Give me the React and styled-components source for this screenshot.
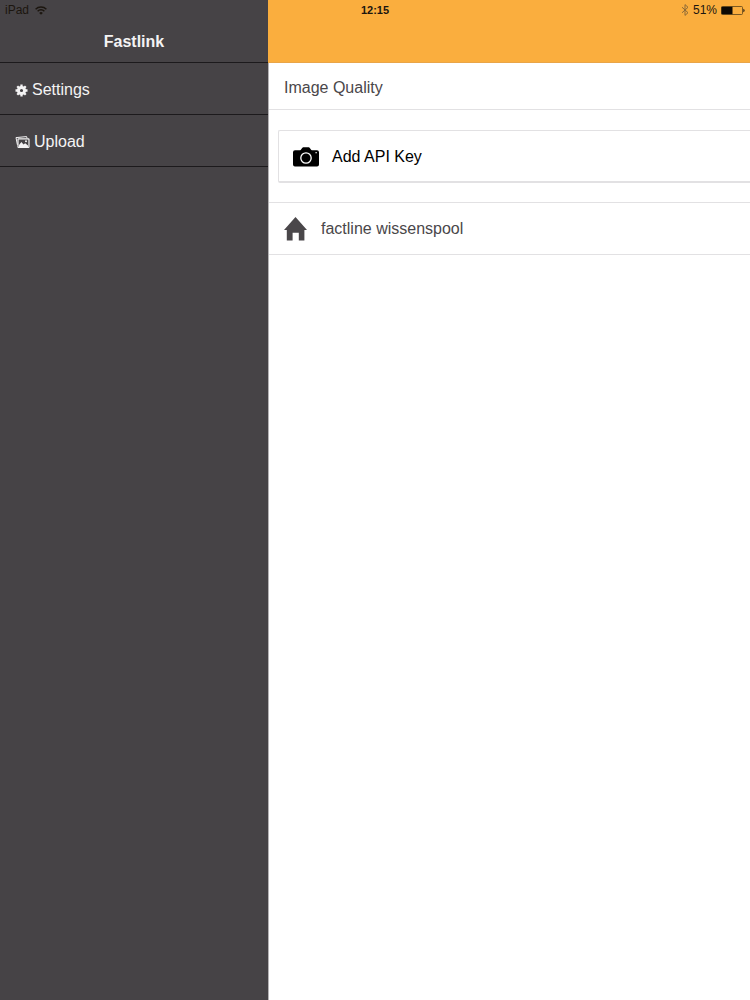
import styled, { createGlobalStyle } from 'styled-components'

const GlobalStyle = createGlobalStyle`
  * {
    box-sizing: border-box;
  }
  body {
    margin: 0;
    background: #fff;
    font-family: "Liberation Sans", Helvetica, Arial, sans-serif;
    font-size: 16px;
    line-height: 20px;
  }
`

const Layout = styled.div`
  display: grid;
  grid-template-columns: 268px 1fr;
  grid-template-rows: 20px 1fr;
  min-height: 100vh;
`

const StatusBar = styled.header`
  grid-area: 1 / 1 / 2 / 3;
  z-index: 1;
  display: grid;
  grid-template-columns: 1fr auto 1fr;
  align-items: center;
  padding: 0 5px;
  font-size: 12px;
  color: #1c160f;
`

const StatusGroup = styled.div`
  display: flex;
  align-items: center;
  gap: ${({ $end }) => ($end ? '4px' : '6px')};
  justify-content: ${({ $end }) => ($end ? 'flex-end' : 'flex-start')};
`

const Clock = styled.time`
  font-size: 11px;
  font-weight: bold;
`

const Sidebar = styled.aside`
  grid-area: 1 / 1 / 3 / 2;
  background: #464346;
  color: #f4f3f4;
`

const SidebarHeader = styled.div`
  height: 63px;
  padding-top: 22px;
  display: flex;
  align-items: center;
  justify-content: center;
  border-bottom: 1px solid #1c1a1c;
`

const Title = styled.h1`
  margin: 0;
  font-size: 16px;
  line-height: 20px;
`

const MenuLink = styled.a`
  display: flex;
  align-items: center;
  gap: 4px;
  height: 52px;
  padding: 3px 15px 0;
  border-bottom: 1px solid #1c1a1c;
  color: inherit;
  text-decoration: none;
`

const Content = styled.main`
  grid-area: 1 / 2 / 3 / 3;
  min-width: 0;
  border-left: 1px solid #b5b3b5;
  background: #fff;
  color: #4a474a;
`

const TopBar = styled.div`
  height: 63px;
  margin-left: -1px;
  background: #faae3e;
  border-bottom: 1px solid #e9a548;
`

const Row = styled.button`
  display: flex;
  align-items: center;
  gap: 14px;
  width: 100%;
  height: ${({ $height }) => $height}px;
  padding: ${({ $topLine }) => ($topLine ? '1px 15px 0' : '4px 15px 0')};
  border: solid #e2e1e3;
  border-width: ${({ $topLine }) => ($topLine ? '1px 0' : '0 0 1px')};
  background: none;
  color: inherit;
  font: inherit;
  text-align: left;
`

const Card = styled.section`
  margin: 20px 0 19px 9px;
  border: 1px solid #e2e1e3;
  border-right: 0;
  border-bottom-width: 2px;
  border-radius: 2px 0 0 2px;
`

const CardButton = styled.button`
  display: flex;
  align-items: center;
  gap: 13px;
  width: 100%;
  height: 50px;
  padding: 2px 14px 0;
  border: 0;
  background: none;
  color: #000;
  font: inherit;
  text-align: left;
`

const Svg = styled.svg`
  display: block;
  flex: none;
`

const WifiIcon = () => (
  <Svg width="12" height="9" viewBox="0 0 12 9" fill="none" stroke="currentColor" strokeWidth="1.4" aria-hidden="true">
    <path d="M.6 3.2a7.6 7.6 0 0 1 10.8 0" />
    <path d="M2.6 5.2a4.8 4.8 0 0 1 6.8 0" />
    <path d="M6 8.8 4.2 6.9a2.6 2.6 0 0 1 3.6 0z" fill="currentColor" stroke="none" />
  </Svg>
)

const BluetoothIcon = () => (
  <Svg width="8" height="12" viewBox="0 0 8 12" fill="none" stroke="#8c6a38" strokeWidth="1" aria-hidden="true">
    <path d="M1 3.2 7 8.7 4 11.4V.6l3 2.7L1 8.8" />
  </Svg>
)

const BatteryIcon = () => (
  <Svg width="24" height="9" viewBox="0 0 24 9" aria-hidden="true">
    <rect x=".5" y=".5" width="21" height="8" rx="1" fill="none" stroke="#5a421a" strokeWidth=".8" />
    <rect x=".5" y=".8" width="11" height="7.4" fill="#0d0a05" />
    <path d="M22.4 2.8c1.6.5 1.6 2.9 0 3.4z" fill="#1c160f" />
  </Svg>
)

const GearIcon = () => (
  <Svg width="13" height="13" viewBox="0 0 26 26" fill="none" stroke="currentColor" aria-hidden="true">
    <circle cx="13" cy="13" r="6.2" strokeWidth="6" />
    <path d="M13 1v24M1 13h24M4.5 4.5l17 17M21.5 4.5l-17 17" strokeWidth="4.6" strokeDasharray="5 14 5" />
  </Svg>
)

const ImagesIcon = () => (
  <Svg width="15" height="13" viewBox="0 0 15 13" aria-hidden="true">
    <path d="M2.4 8.8 1 1.6 11.6.6l.4 1.6" fill="none" stroke="currentColor" strokeWidth="1" />
    <rect x="3" y="2.8" width="11" height="8.6" rx=".6" fill="none" stroke="currentColor" strokeWidth="1.2" />
    <path d="M4 11V9l2.4-3 2.1 2.4 1.7-1.2L13 9.5V11z" fill="currentColor" />
    <circle cx="11" cy="5.2" r="1" fill="currentColor" />
  </Svg>
)

const CameraIcon = () => (
  <Svg width="26" height="20" viewBox="0 0 26 20" aria-hidden="true">
    <path
      d="M2 3.2h5.2c1-.2 1.8-2.7 3-3h5.6c1.2.3 2 2.800 3 3H24a2 2 0 0 1 2 2V17.500a2 2 0 0 1-2 2H2a2 2 0 0 1-2-2V5.200a2 2 0 0 1 2-2z"
      fill="#000"
    />
    <circle cx="13" cy="11" r="5.2" fill="none" stroke="#fff" strokeWidth="1.3" />
    <rect x="22.4" y="5" width="1.5" height="1.3" fill="#ccc" />
  </Svg>
)

const HomeIcon = () => (
  <Svg width="23" height="24" viewBox="0 0 23 24" fill="currentColor" aria-hidden="true">
    <path d="M11.5 0 23 13h-2.6v10.5h-5.6v-7.7H8.6v7.7H2.8V13H0z" />
  </Svg>
)

const App = () => {
  return (
    <>
      <GlobalStyle />
      <Layout>
        <StatusBar>
          <StatusGroup>
            <span>iPad</span>
            <WifiIcon />
          </StatusGroup>
          <Clock>12:15</Clock>
          <StatusGroup $end>
            <BluetoothIcon />
            <span>51%</span>
            <BatteryIcon />
          </StatusGroup>
        </StatusBar>

        <Sidebar>
          <SidebarHeader>
            <Title>Fastlink</Title>
          </SidebarHeader>
          <nav>
            <MenuLink href="#settings">
              <GearIcon />
              Settings
            </MenuLink>
            <MenuLink href="#upload">
              <ImagesIcon />
              Upload
            </MenuLink>
          </nav>
        </Sidebar>

        <Content>
          <TopBar />
          <Row type="button" $height={47}>Image Quality</Row>
          <Card>
            <CardButton type="button">
              <CameraIcon />
              Add API Key
            </CardButton>
          </Card>
          <Row type="button" $height={53} $topLine>
            <HomeIcon />
            factline wissenspool
          </Row>
        </Content>
      </Layout>
    </>
  )
}

export default App
